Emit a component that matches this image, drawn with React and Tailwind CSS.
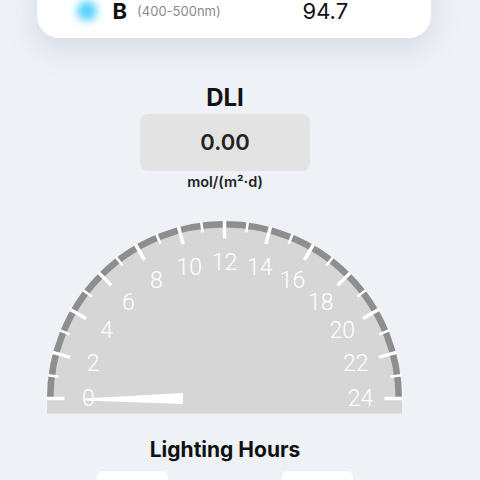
import React from "react";

const CX = 224.5;
const CY = 183.5;
const R = 177.5;

function Gauge() {
  const ticks = [];
  const labels = [];
  for (let h = 0; h <= 24; h++) {
    const a = Math.PI - (h * Math.PI) / 24;
    const major = h % 2 === 0;
    const r1 = R + 0.5;
    const r2 = major ? R - 17.5 : R - 10;
    ticks.push(
      <line
        key={"t" + h}
        x1={CX + r1 * Math.cos(a)}
        y1={CY - r1 * Math.sin(a)}
        x2={CX + r2 * Math.cos(a)}
        y2={CY - r2 * Math.sin(a)}
        stroke="#ffffff"
        strokeWidth={major ? 3.5 : 2.5}
      />
    );
    if (major) {
      const lr = 136;
      labels.push(
        <text
          key={"l" + h}
          x={CX + lr * Math.cos(a)}
          y={CY - lr * Math.sin(a)}
          fill="#ffffff"
          fontSize="23"
          fontWeight="300"
          fontFamily="Roboto, 'Liberation Sans', sans-serif"
          textAnchor="middle"
          dominantBaseline="central"
        >
          {h}
        </text>
      );
    }
  }
  const ringR = R - 3.25;
  return (
    <svg width="450" height="200" viewBox="0 0 450 200" className="block">
      <path
        d={`M ${CX - R} ${CY} A ${R} ${R} 0 0 1 ${CX + R} ${CY} L ${CX + R} ${CY + 15} L ${CX - R} ${CY + 15} Z`}
        fill="#d6d6d6"
      />
      <path
        d={`M ${CX - ringR} ${CY} A ${ringR} ${ringR} 0 0 1 ${CX + ringR} ${CY}`}
        fill="none"
        stroke="#8e8e8e"
        strokeWidth="6.5"
      />
      {ticks}
      {labels}
      <polygon points="84,183.5 183,178 183,189 84,185.5" fill="#ffffff" />
    </svg>
  );
}

export default function App() {
  return (
    <div
      className="w-[480px] h-[480px] overflow-hidden bg-[#eef1f6]"
      style={{ fontFamily: "Inter, 'Noto Sans', sans-serif" }}
    >
      <div className="w-[450px] flex flex-col">
        <div className="ml-[37px] w-[394px] -mt-[40px] pt-[40px] pb-[16px] rounded-[22px] bg-white shadow-[0_10px_28px_rgba(150,160,185,0.28)]">
          <div className="flex items-center h-[22px] pl-[36.5px]">
            <div className="w-[229px] flex items-center">
              <div className="w-[26px] h-[22px] flex items-center justify-center">
                <div className="w-[20px] h-[20px] rounded-full bg-[#4fd2fa] blur-[4px]" />
              </div>
              <span className="ml-[13px] text-[22px] font-bold text-[#111] leading-[22px]">B</span>
              <span className="ml-[10px] text-[13px] text-[#8a8a8a] leading-[18px]">(400-500nm)</span>
            </div>
            <span className="text-[22px] text-[#111] leading-[22px]">94.7</span>
          </div>
        </div>

        <div className="mt-[46px] h-[28px] flex items-center justify-center text-[24px] font-bold text-[#111]">
          DLI
        </div>
        <div className="mt-[2px] mx-auto w-[170px] h-[57px] rounded-[8px] bg-[#e3e3e3] flex items-center justify-center text-[22px] font-semibold text-[#222]">
          0.00
        </div>
        <div className="mt-[1px] h-[20px] flex items-center justify-center text-[14.5px] font-semibold text-[#222]">
          mol/(m²·d)
        </div>

        <div className="mt-[23px]">
          <Gauge />
        </div>

        <div className="mt-[21px] h-[28px] flex items-center justify-center text-[21px] font-bold text-[#111]">
          Lighting Hours
        </div>
        <div className="mt-[7px] flex justify-center gap-[114px]">
          <div className="w-[71px] h-[40px] rounded-[6px] bg-white" />
          <div className="w-[71px] h-[40px] rounded-[6px] bg-white" />
        </div>
      </div>
    </div>
  );
}
